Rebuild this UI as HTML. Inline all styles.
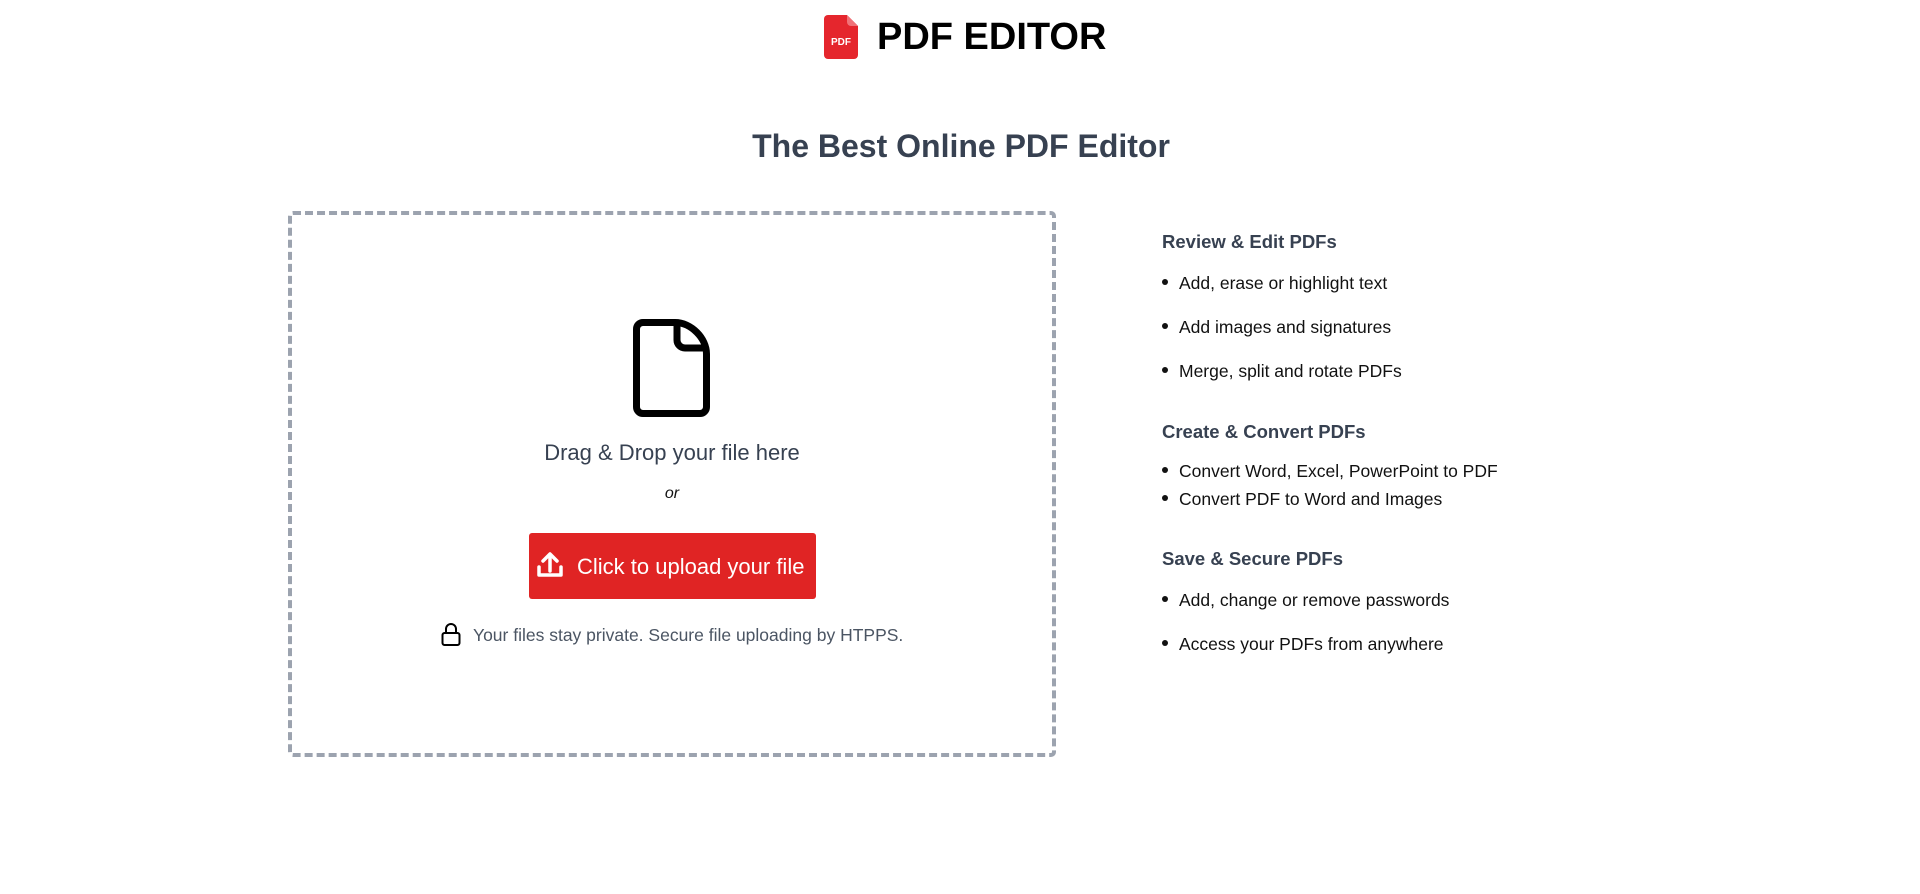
<!DOCTYPE html>
<html><head><meta charset="utf-8"><style>
*{margin:0;padding:0;box-sizing:border-box}
body{width:1920px;height:894px;background:#fff;font-family:"Liberation Sans",sans-serif;position:relative;overflow:hidden}
.a{position:absolute;white-space:nowrap}
.h{color:#374151;font-weight:bold;font-size:18.5px}
.li{font-size:17.5px;color:#111}
.li::before{content:"";position:absolute;left:-17px;top:6px;width:6px;height:6px;border-radius:50%;background:#111}
</style></head><body>
<svg class="a" style="left:824px;top:15px" width="34" height="44" viewBox="0 0 34 44">
<path d="M4 0H23L34 11V40a4 4 0 0 1-4 4H4a4 4 0 0 1-4-4V4a4 4 0 0 1 4-4z" fill="#e5262d"/>
<path d="M23 0L34 11H27a4 4 0 0 1-4-4z" fill="#f07278"/>
<text x="17" y="30" font-family="Liberation Sans" font-weight="bold" font-size="10" fill="#fff" text-anchor="middle">PDF</text>
</svg>
<div class="a" style="left:877px;top:16px;font-size:38px;font-weight:bold;color:#000">PDF EDITOR</div>
<div class="a" style="left:0;width:1922px;text-align:center;top:128px;font-size:32px;font-weight:bold;color:#374151">The Best Online PDF Editor</div>
<div class="a" style="left:288px;top:211px;width:768px;height:546px;border:4px dashed #9ca3af;border-radius:5px"></div>
<svg class="a" style="left:633px;top:319px" width="77" height="98" viewBox="0 0 77 98">
<path d="M10 3.5H42C58 3.5 73.5 19 73.5 35V88a6.5 6.5 0 0 1-6.5 6.5H10A6.5 6.5 0 0 1 3.5 88V10A6.5 6.5 0 0 1 10 3.5z" fill="none" stroke="#000" stroke-width="7" stroke-linejoin="round"/>
<path d="M44 4V21a8 8 0 0 0 8 8H72" fill="none" stroke="#000" stroke-width="7"/>
</svg>
<div class="a" style="left:0;width:1344px;text-align:center;top:440px;font-size:22px;color:#374151">Drag &amp; Drop your file here</div>
<div class="a" style="left:0;width:1344px;text-align:center;top:485px;font-size:16px;font-style:italic;color:#111">or</div>
<div class="a" style="left:529px;top:533px;width:287px;height:66px;background:#e02424;border-radius:3px"></div>
<svg class="a" style="left:536px;top:551px" width="28" height="28" viewBox="0 0 28 28" fill="none" stroke="#fff" stroke-width="3.5" stroke-linecap="round" stroke-linejoin="round">
<path d="M14 20V4M7 10l7-7 7 7"/><path d="M3 16v8h22v-8"/>
</svg>
<div class="a" style="left:577px;top:554px;font-size:22px;color:#fff">Click to upload your file</div>
<svg class="a" style="left:441px;top:622px" width="20" height="25" viewBox="0 0 20 25" fill="none" stroke="#000" stroke-width="2">
<path d="M5 11V7a5 5 0 0 1 10 0v4"/><rect x="1.5" y="11" width="17" height="12" rx="2"/>
</svg>
<div class="a" style="left:473px;top:625px;font-size:17.5px;color:#4b5563">Your files stay private. Secure file uploading by HTPPS.</div>
<div class="a h" style="left:1162px;top:231px">Review &amp; Edit PDFs</div>
<div class="a li" style="left:1179px;top:273px">Add, erase or highlight text</div>
<div class="a li" style="left:1179px;top:317px">Add images and signatures</div>
<div class="a li" style="left:1179px;top:361px">Merge, split and rotate PDFs</div>
<div class="a h" style="left:1162px;top:421px">Create &amp; Convert PDFs</div>
<div class="a li" style="left:1179px;top:461px">Convert Word, Excel, PowerPoint to PDF</div>
<div class="a li" style="left:1179px;top:489px">Convert PDF to Word and Images</div>
<div class="a h" style="left:1162px;top:548px">Save &amp; Secure PDFs</div>
<div class="a li" style="left:1179px;top:590px">Add, change or remove passwords</div>
<div class="a li" style="left:1179px;top:634px">Access your PDFs from anywhere</div>
</body></html>
